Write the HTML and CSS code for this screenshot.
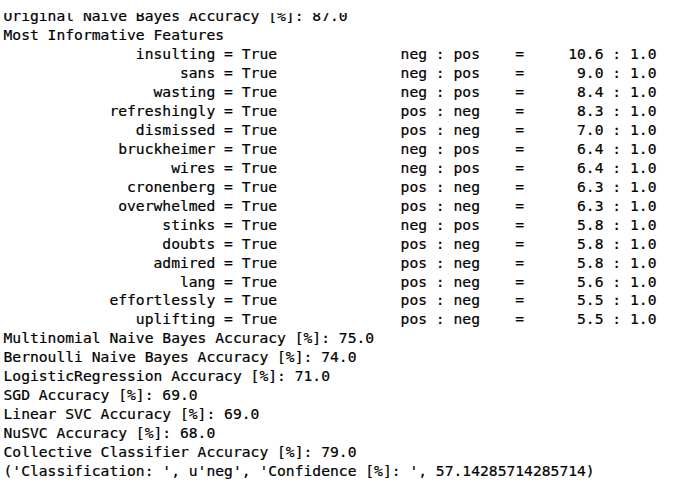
FILE: index.html
```
<!DOCTYPE html>
<html>
<head>
<meta charset="utf-8">
<link rel="stylesheet" href="styles.css">
</head>
<body>
<div class="term">
<pre class="out">Original Naive Bayes Accuracy [%]: 87.0
Most Informative Features
               insulting = True              neg : pos    =     10.6 : 1.0
                    sans = True              neg : pos    =      9.0 : 1.0
                 wasting = True              neg : pos    =      8.4 : 1.0
            refreshingly = True              pos : neg    =      8.3 : 1.0
               dismissed = True              pos : neg    =      7.0 : 1.0
             bruckheimer = True              neg : pos    =      6.4 : 1.0
                   wires = True              neg : pos    =      6.4 : 1.0
              cronenberg = True              pos : neg    =      6.3 : 1.0
             overwhelmed = True              pos : neg    =      6.3 : 1.0
                  stinks = True              neg : pos    =      5.8 : 1.0
                  doubts = True              pos : neg    =      5.8 : 1.0
                 admired = True              pos : neg    =      5.8 : 1.0
                    lang = True              pos : neg    =      5.6 : 1.0
            effortlessly = True              pos : neg    =      5.5 : 1.0
               uplifting = True              pos : neg    =      5.5 : 1.0
Multinomial Naive Bayes Accuracy [%]: 75.0
Bernoulli Naive Bayes Accuracy [%]: 74.0
LogisticRegression Accuracy [%]: 71.0
SGD Accuracy [%]: 69.0
Linear SVC Accuracy [%]: 69.0
NuSVC Accuracy [%]: 68.0
Collective Classifier Accuracy [%]: 79.0
('Classification: ', u'neg', 'Confidence [%]: ', 57.14285714285714)</pre>
</div>
</body>
</html>
```

FILE: styles.css
```
html, body {
  margin: 0;
  padding: 0;
  background: #ffffff;
}

.term {
  margin-top: 13px;
  overflow: hidden;
  padding-left: 3.5px;
}

.out {
  margin: -5.6px 0 0 0;
  font-family: "DejaVu Sans Mono", "Liberation Mono", monospace;
  font-size: 14.67px;
  line-height: 18.93px;
  color: #000000;
  -webkit-text-stroke: 0.2px #000000;
}
```
